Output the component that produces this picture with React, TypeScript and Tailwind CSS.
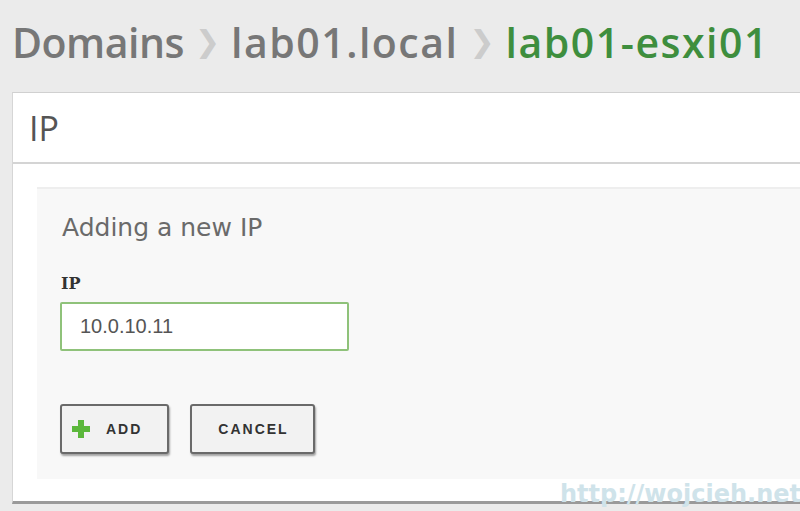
export default function App() {
  return (
    <div className="relative h-[511px] w-[800px] overflow-hidden bg-[#ebebeb]">
      {/* Breadcrumb */}
      <div
        className="flex h-[92px] items-center whitespace-nowrap pb-[8px] pl-[12px] text-[41px] font-semibold leading-none"
        style={{ fontFamily: "'Open Sans', sans-serif" }}
      >
        <span className="tracking-[-0.5px] text-[#777777]">Domains</span>
        <span className="mx-[11px] text-[30px] text-[#cccccc]" style={{ fontFamily: "'DejaVu Sans', sans-serif" }}>❯</span>
        <span className="tracking-[1.5px] text-[#777777]">lab01.local</span>
        <span className="mx-[11px] text-[30px] text-[#cccccc]" style={{ fontFamily: "'DejaVu Sans', sans-serif" }}>❯</span>
        <span className="tracking-[1.5px] text-[#3e8e3e]">lab01-esxi01</span>
      </div>

      {/* Panel */}
      <div className="ml-[12px] border-l border-t border-b-[3px] border-l-[#d6d6d6] border-t-[#d0d0d0] border-b-[#9a9a9a] bg-white">
        <div className="flex h-[71px] items-center border-b-2 border-[#d4d4d4] pl-[16px]">
          <h2 className="text-[34px] leading-none text-[#555555]" style={{ fontFamily: "'Open Sans', sans-serif" }}>IP</h2>
        </div>

        <div className="pb-[22px] pl-[24px] pt-[23px]">
          <div className="border-t-2 border-[#eeeeee] bg-[#f8f8f8] pb-[25px] pl-[23px] pt-[22px]">
            <h3 className="pl-[2px] text-[25px] leading-[34px] text-[#6a6a6a]" style={{ fontFamily: "'DejaVu Sans', sans-serif" }}>
              Adding a new IP
            </h3>
            <label
              className="mt-[30px] block pl-[1px] text-[16px] font-bold leading-[18px] text-[#333333]"
              style={{ fontFamily: "'DejaVu Serif', serif" }}
            >
              IP
            </label>
            <input
              defaultValue="10.0.10.11"
              className="mt-[9px] h-[49px] w-[289px] rounded-[2px] border-2 border-[#8fc27a] bg-white pl-[18px] text-[20px] text-[#555555] outline-none"
              style={{ fontFamily: "'Liberation Sans', Arial, sans-serif" }}
            />
            <div className="mt-[53px] flex gap-[21px]" style={{ fontFamily: "'Liberation Sans', Arial, sans-serif" }}>
              <button className="flex h-[50px] w-[109px] items-center rounded-[3px] border-2 border-[#6a6a6a] bg-[#f2f2f2] pl-[9px] text-[14px] font-bold tracking-[2px] text-[#333333] shadow-[1px_2px_2px_rgba(0,0,0,0.35)]">
                <svg viewBox="0 0 20 20" className="h-[20px] w-[20px]">
                  <path d="M7 1h6v6h6v6h-6v6H7v-6H1V7h6z" fill="#5cb83c" />
                </svg>
                <span className="ml-[15px]">ADD</span>
              </button>
              <button className="flex h-[50px] w-[125px] items-center justify-center rounded-[3px] border-2 border-[#6a6a6a] bg-[#f2f2f2] pl-[2px] text-[14px] font-bold tracking-[2px] text-[#333333] shadow-[1px_2px_2px_rgba(0,0,0,0.35)]">
                CANCEL
              </button>
            </div>
          </div>
        </div>
      </div>

      {/* Watermark */}
      <div
        className="absolute left-[560px] top-[480px] text-[24px] font-semibold leading-[28px] text-[#cfe3ea]"
        style={{ fontFamily: "'DejaVu Sans', sans-serif" }}
      >
        http://wojcieh.net
      </div>
    </div>
  );
}
